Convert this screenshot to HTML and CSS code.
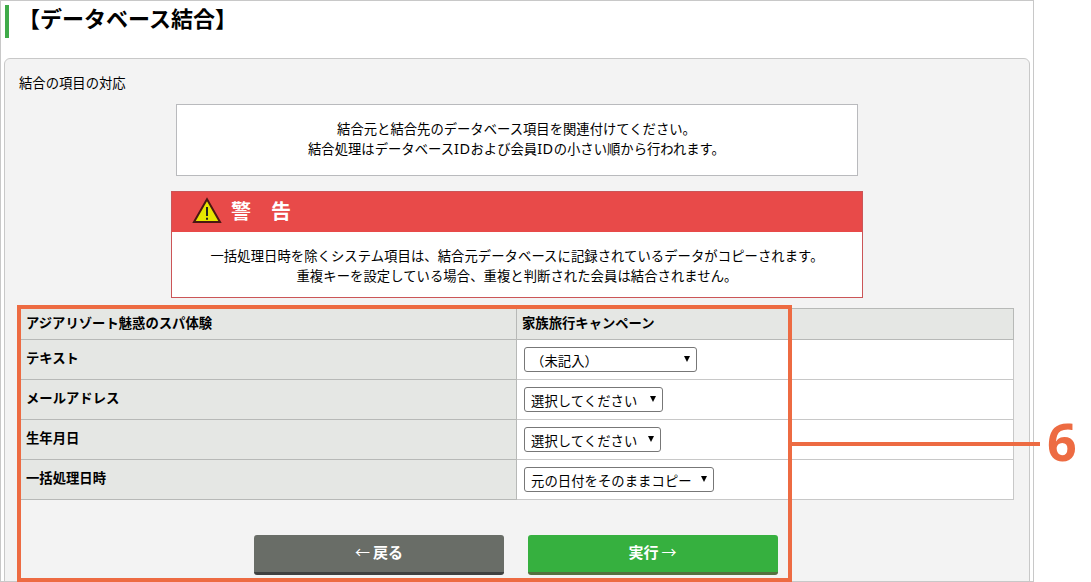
FILE: index.html
```
<!DOCTYPE html>
<html lang="ja">
<head>
  <meta charset="UTF-8">
  <meta name="viewport" content="width=device-width, initial-scale=1">
  <title>データベース結合</title>
  <link rel="stylesheet" href="styles.css">
</head>
<body>
  <div class="window">
    <h1 class="page-title">【データベース結合】</h1>

    <div class="panel">
      <p class="panel-label">結合の項目の対応</p>

      <div class="notice">
        <p>結合元と結合先のデータベース項目を関連付けてください。</p>
        <p>結合処理はデータベース<span class="latin">ID</span>および会員<span class="latin">ID</span>の小さい順から行われます。</p>
      </div>

      <div class="warning">
        <div class="warning-head">
          <svg class="warning-icon" width="30" height="27" viewBox="0 0 30 27">
            <path d="M15 2.2 L28 25 H2 Z" fill="#e6e600" stroke="#4a1712" stroke-width="2"/>
            <path d="M15 10 V19 M15 20.8 V22.8" stroke="#222" stroke-width="2" fill="none"/>
          </svg>
          <h2>警　告</h2>
        </div>
        <div class="warning-body">
          <p>一括処理日時を除くシステム項目は、結合元データベースに記録されているデータがコピーされます。</p>
          <p>重複キーを設定している場合、重複と判断された会員は結合されません。</p>
        </div>
      </div>

      <table class="mapping">
        <thead>
          <tr>
            <th class="col-source">アジアリゾート魅惑のスパ体験</th>
            <th>家族旅行キャンペーン</th>
          </tr>
        </thead>
        <tbody>
          <tr>
            <th>テキスト</th>
            <td><div class="select text"><select><option>（未記入）</option></select></div></td>
          </tr>
          <tr>
            <th>メールアドレス</th>
            <td><div class="select mail"><select><option>選択してください</option></select></div></td>
          </tr>
          <tr>
            <th>生年月日</th>
            <td><div class="select birthday"><select><option>選択してください</option></select></div></td>
          </tr>
          <tr>
            <th>一括処理日時</th>
            <td><div class="select batch"><select><option>元の日付をそのままコピー</option></select></div></td>
          </tr>
        </tbody>
      </table>

      <div class="buttons">
        <button class="btn btn-back"><span class="arrow">←</span>戻る</button>
        <button class="btn btn-run">実行<span class="arrow">→</span></button>
      </div>
    </div>
  </div>

  <!-- Callout drawn over the screen -->
  <div class="callout-box"></div>
  <div class="callout-line"></div>
  <div class="callout-number">6</div>
</body>
</html>
```
FILE: styles.css
```
* {
  margin: 0;
  padding: 0;
  box-sizing: border-box;
}
body {
  position: relative;
  height: 582px;
  overflow: hidden;
  background: #fff;
  color: #000;
  font-family: "Noto Sans CJK JP", sans-serif;
  font-size: 13.333px;
  line-height: 20px;
}
.window {
  width: 1034px;
  height: 582px;
  padding: 4px 3px 0;
  border: 1px solid #c8c8c8;
  overflow: hidden;
}
.page-title {
  height: 33px;
  margin-left: 1px;
  padding-left: 9px;
  border-left: 4px solid #3fab49;
  font-size: 22px;
  font-weight: bold;
  line-height: 24px;
}
.panel {
  height: 540px;
  margin-top: 20px;
  padding: 14px 15px 0 14px;
  background: #f3f3f3;
  border: 1px solid #c8c8c8;
  border-radius: 6px;
}
.panel-label {
  height: 31px;
}
/* Messages */
.notice {
  width: 682px;
  height: 72px;
  margin-left: 157px;
  padding: 14px 1px 0 0;
  background: #fff;
  border: 1px solid #b9babd;
  text-align: center;
}
.latin {
  font-family: "Noto Sans", sans-serif;
  font-size: 14.5px;
  letter-spacing: 0.5px;
  line-height: 1;
}
.warning {
  width: 692px;
  height: 107px;
  margin: 15px 0 0 152px;
  background: #fff;
  border: 1px solid #cb5557;
  text-align: center;
}
.warning-head {
  display: flex;
  align-items: center;
  height: 40px;
  padding-left: 20px;
  background: #e84a49;
  color: #fff;
}
.warning-icon {
  margin: -4px 9px 0 0;
}
.warning-head h2 {
  margin-top: -2px;
  font-size: 20px;
  font-weight: bold;
  line-height: 38px;
}
.warning-body {
  padding-top: 14px;
  letter-spacing: 0.06px;
}
/* Item mapping table */
.mapping {
  width: 995px;
  margin-top: 10px;
  border-collapse: collapse;
  table-layout: fixed;
}
.mapping th,
.mapping td {
  height: 40px;
  border: 1px solid #c8c8c8;
  text-align: left;
  vertical-align: top;
}
.mapping th {
  padding: 8px 5px 0 6px;
  background: #e5e7e4;
  border-color: #b7b9b7;
  font-weight: bold;
}
.mapping thead th {
  height: 31px;
  padding: 4px 5px 0 5px;
}
.mapping .col-source {
  width: 497px;
  padding-left: 6px;
}
.mapping td {
  padding: 7px;
  background: #fff;
}
.select {
  position: relative;
  height: 25px;
}
.select select {
  width: 100%;
  height: 25px;
  padding: 2px 6px 0;
  appearance: none;
  background: #fff;
  border: 1px solid #777;
  border-radius: 3px;
  color: #000;
  font-family: inherit;
  font-size: 13.333px;
  letter-spacing: 0.06px;
}
.select::after {
  content: "";
  position: absolute;
  top: 9px;
  right: 7px;
  border: solid transparent;
  border-width: 6px 3.5px 0;
  border-top-color: #000;
}
.select.text { width: 173px; }
.select.mail { width: 139px; }
.select.birthday { width: 137px; }
.select.batch { width: 190px; }
/* Buttons */
.buttons {
  display: flex;
  gap: 24px;
  margin: 35px 0 0 235px;
}
.btn {
  width: 250px;
  height: 40px;
  padding-bottom: 4px;
  border: none;
  border-bottom: 3px solid #3f4140;
  border-radius: 3px;
  color: #fff;
  font-family: inherit;
  font-size: 15px;
  font-weight: bold;
}
.btn-back {
  padding-right: 3px;
  background: #696d67;
}
.btn-run {
  padding-left: 2px;
  background: #36b03f;
  border-bottom-color: #55703f;
}
.arrow {
  margin: 0 3px;
  font-weight: normal;
}
/* Callout */
.callout-box {
  position: absolute;
  left: 17px;
  top: 305px;
  width: 775px;
  height: 277px;
  border: 4px solid #ed6b42;
}
.callout-line {
  position: absolute;
  left: 792px;
  top: 442px;
  width: 248px;
  height: 4px;
  background: #ed6b42;
}
.callout-number {
  position: absolute;
  left: 1047px;
  top: 416px;
  color: #ed6b42;
  font-family: "Open Sans", "Noto Sans", sans-serif;
  font-size: 52px;
  font-weight: bold;
  line-height: 50px;
}
```
